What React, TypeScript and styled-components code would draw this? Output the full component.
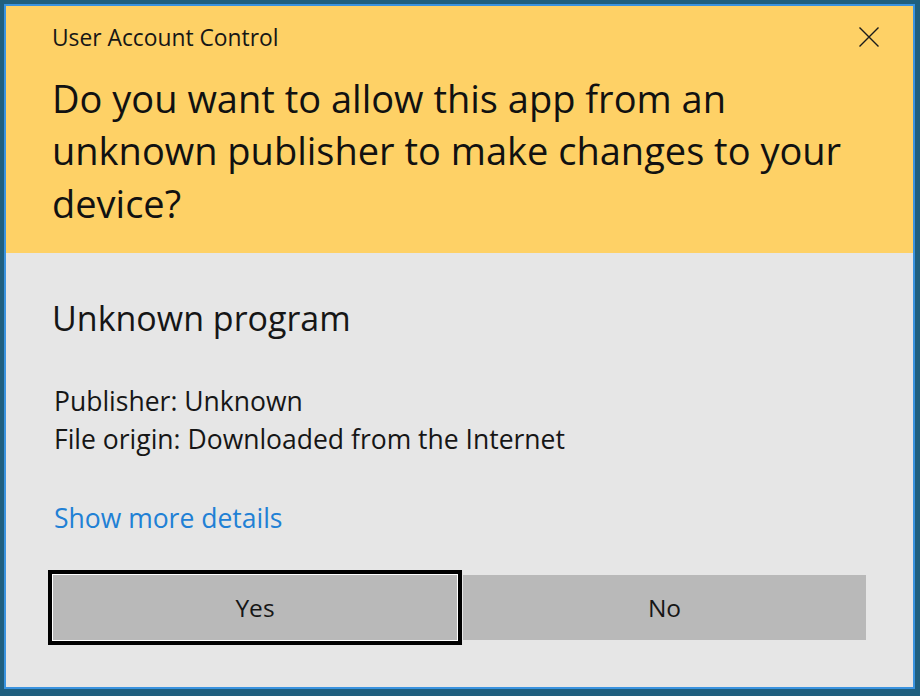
import React from "react";
import styled, { createGlobalStyle } from "styled-components";

const Global = createGlobalStyle`
  html, body {
    margin: 0;
    padding: 0;
    background: #1f5f7f;
  }
  body {
    font-family: "Open Sans", "Noto Sans", Arial, sans-serif;
    -webkit-font-smoothing: antialiased;
  }
  * { box-sizing: border-box; }
`;

const Frame = styled.div`
  width: 920px;
  height: 696px;
  padding: 4px 5px 7px 4px;
  background: #1f5f7f;
`;

const Dialog = styled.div`
  height: 100%;
  border: 2px solid #3a93df;
  display: flex;
  flex-direction: column;
  background: #e6e6e6;
`;

const Header = styled.header`
  background: #fed166;
  padding: 17px 33px 0 46px;
  height: 247px;
`;

const CaptionRow = styled.div`
  display: flex;
  align-items: flex-start;
  justify-content: space-between;
`;

const Caption = styled.div`
  font-size: 22.8px;
  line-height: 30px;
  color: #161616;
`;

const CloseButton = styled.button`
  width: 22px;
  height: 22px;
  margin-top: 3px;
  padding: 0;
  border: none;
  background: transparent;
  display: flex;
  align-items: center;
  justify-content: center;
  cursor: pointer;
`;

const Title = styled.h1`
  margin: 18.9px 0 0 0;
  font-size: 38px;
  line-height: 52.5px;
  font-weight: 400;
  color: #111;
`;

const Body = styled.main`
  flex: 1;
  padding: 43.4px 47px 0 46px;
  display: flex;
  flex-direction: column;
`;

const ProgramName = styled.div`
  font-size: 34px;
  line-height: 44px;
  color: #161616;
`;

const Details = styled.div`
  margin-top: 43px;
  padding-left: 2px;
`;

const DetailLine = styled.div`
  font-size: 26.5px;
  line-height: 37.5px;
  color: #161616;
`;

const MoreLink = styled.a`
  margin-top: 42px;
  padding-left: 2px;
  font-size: 26.5px;
  line-height: 36.5px;
  color: #2180d5;
  text-decoration: none;
  cursor: pointer;
`;

const ButtonRow = styled.div`
  margin-top: 37.85px;
  margin-left: 1px;
  display: grid;
  grid-template-columns: 404px 403px;
  column-gap: 6px;
`;

const DialogButton = styled.button<{ $focused?: boolean }>`
  height: 65px;
  border: none;
  background: #b9b9b9;
  font-family: "Open Sans", "Noto Sans", Arial, sans-serif;
  font-size: 24.5px;
  color: #161616;
  cursor: pointer;
  box-shadow: ${(p) =>
    p.$focused ? "0 0 0 1px #ffffff, 0 0 0 5px #000000" : "none"};
  position: relative;
  z-index: ${(p) => (p.$focused ? 1 : 0)};
`;

export default function App() {
  return (
    <>
      <Global />
      <Frame>
        <Dialog>
          <Header>
            <CaptionRow>
              <Caption>User Account Control</Caption>
              <CloseButton aria-label="Close">
                <svg width="22" height="22" viewBox="0 0 22 22">
                  <path
                    d="M1.5 1.5 L20.5 20.5 M20.5 1.5 L1.5 20.5"
                    stroke="#1b1b1b"
                    strokeWidth="1.4"
                    fill="none"
                  />
                </svg>
              </CloseButton>
            </CaptionRow>
            <Title>
              Do you want to allow this app from an
              <br />
              unknown publisher to make changes to your
              <br />
              device?
            </Title>
          </Header>
          <Body>
            <ProgramName>Unknown program</ProgramName>
            <Details>
              <DetailLine>Publisher: Unknown</DetailLine>
              <DetailLine>File origin: Downloaded from the Internet</DetailLine>
            </Details>
            <MoreLink>Show more details</MoreLink>
            <ButtonRow>
              <DialogButton $focused>Yes</DialogButton>
              <DialogButton>No</DialogButton>
            </ButtonRow>
          </Body>
        </Dialog>
      </Frame>
    </>
  );
}
